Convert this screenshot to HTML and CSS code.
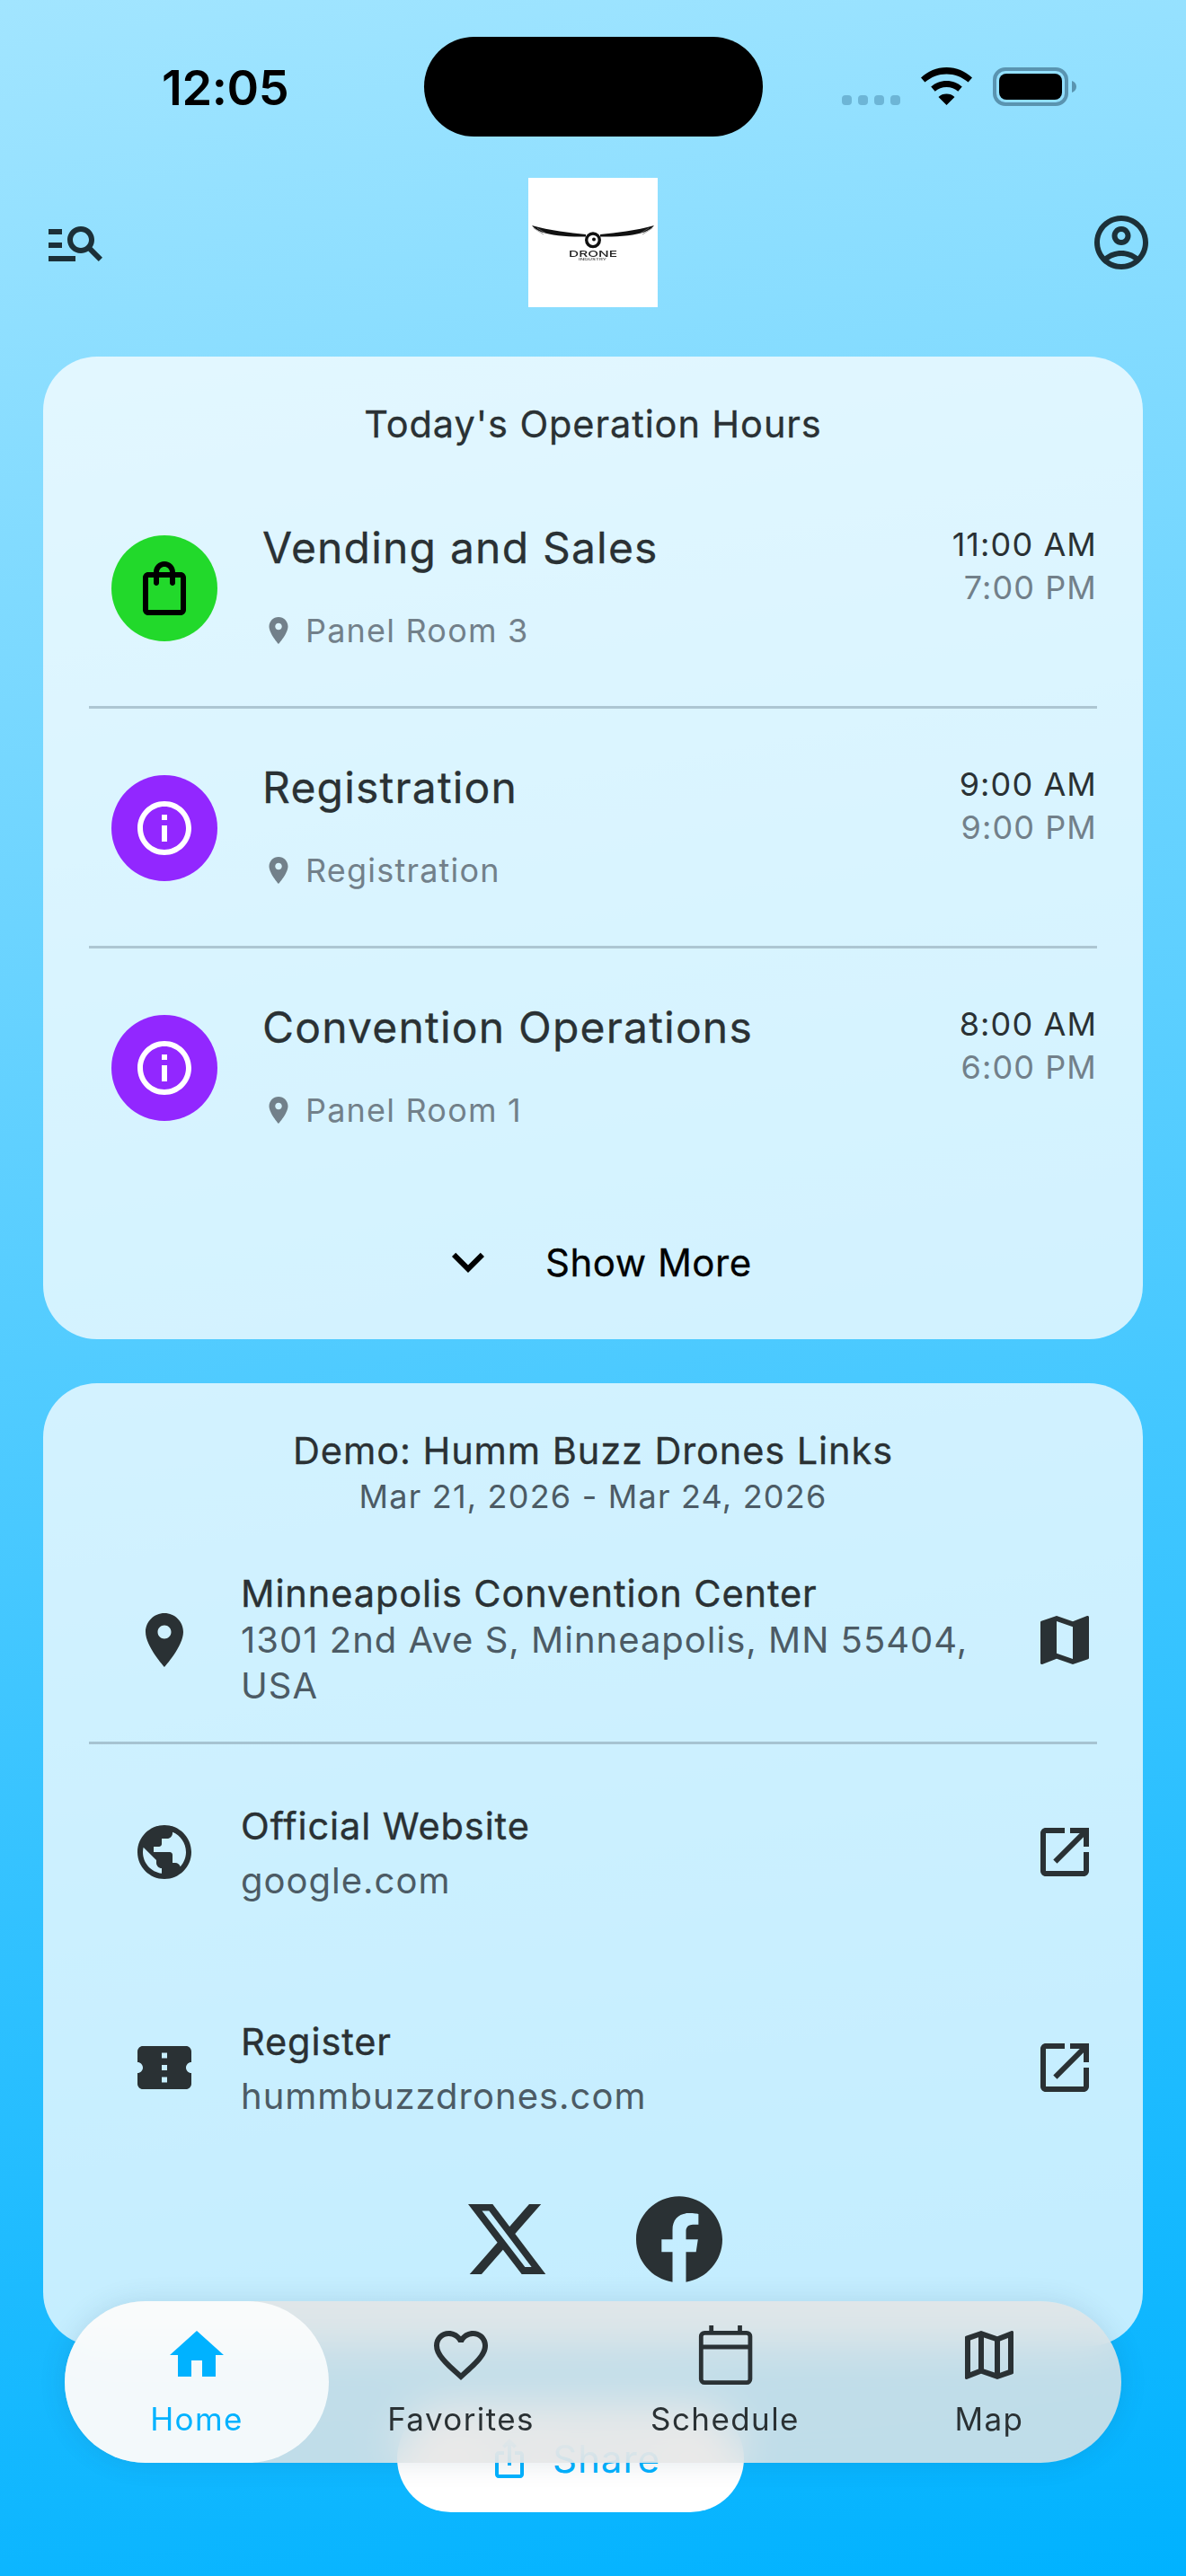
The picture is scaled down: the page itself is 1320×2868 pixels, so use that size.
FILE: index.html
```html
<!DOCTYPE html>
<html>

<head>
    <meta charset="utf-8">
    <title>Humm Buzz Drones</title>
    <link rel="stylesheet" href="styles.css">
</head>

<body>
    <svg class="sprite" xmlns="http://www.w3.org/2000/svg">
        <symbol id="i-search" viewBox="0 0 24 24"><path d="M7 9H2V7h5v2zm0 3H2v2h5v-2zm13.59 7l-3.83-3.83c-.8.52-1.74.83-2.76.83-2.76 0-5-2.24-5-5s2.24-5 5-5 5 2.24 5 5c0 1.02-.31 1.96-.83 2.75L22 17.59 20.59 19zM17 11c0-1.65-1.35-3-3-3s-3 1.35-3 3 1.35 3 3 3 3-1.35 3-3zM2 19h10v-2H2v2z"/></symbol>
        <symbol id="i-account" viewBox="0 0 24 24"><path d="M12 2C6.48 2 2 6.48 2 12s4.48 10 10 10 10-4.48 10-10S17.52 2 12 2zM7.35 18.5C8.66 17.56 10.26 17 12 17s3.34.56 4.65 1.5c-1.31.94-2.91 1.5-4.65 1.5s-3.34-.56-4.65-1.5zm10.79-1.38C16.45 15.8 14.32 15 12 15s-4.45.8-6.14 2.12C4.7 15.73 4 13.95 4 12c0-4.42 3.58-8 8-8s8 3.58 8 8c0 1.95-.7 3.73-1.86 5.12z"/><path d="M12 6c-1.93 0-3.5 1.57-3.5 3.5S10.07 13 12 13s3.5-1.57 3.5-3.5S13.93 6 12 6zm0 5c-.83 0-1.5-.67-1.5-1.5S11.17 8 12 8s1.5.67 1.5 1.5S12.83 11 12 11z"/></symbol>
        <symbol id="i-bag" viewBox="0 0 24 24"><path d="M18 6h-2c0-2.21-1.79-4-4-4S8 3.79 8 6H6c-1.1 0-2 .9-2 2v12c0 1.1.9 2 2 2h12c1.1 0 2-.9 2-2V8c0-1.1-.9-2-2-2zm-6-2c1.1 0 2 .9 2 2h-4c0-1.1.9-2 2-2zm6 16H6V8h2v2c0 .55.45 1 1 1s1-.45 1-1V8h4v2c0 .55.45 1 1 1s1-.45 1-1V8h2v12z"/></symbol>
        <symbol id="i-info" viewBox="0 0 24 24"><path d="M11 7h2v2h-2zm0 4h2v6h-2zm1-9C6.48 2 2 6.48 2 12s4.48 10 10 10 10-4.48 10-10S17.52 2 12 2zm0 18c-4.41 0-8-3.59-8-8s3.59-8 8-8 8 3.59 8 8-3.59 8-8 8z"/></symbol>
        <symbol id="i-place" viewBox="0 0 24 24"><path d="M12 2C8.13 2 5 5.13 5 9c0 5.25 7 13 7 13s7-7.75 7-13c0-3.87-3.13-7-7-7zm0 9.5c-1.38 0-2.5-1.12-2.5-2.5s1.12-2.5 2.5-2.5 2.5 1.12 2.5 2.5-1.12 2.5-2.5 2.5z"/></symbol>
        <symbol id="i-chevron" viewBox="0 0 24 24"><path d="M7.41 8.59L12 13.17l4.59-4.58L18 10l-6 6-6-6 1.41-1.41z"/></symbol>
        <symbol id="i-map" viewBox="0 0 24 24"><path d="M20.5 3l-.16.03L15 5.1 9 3 3.36 4.9c-.21.07-.36.25-.36.48V20.5c0 .28.22.5.5.5l.16-.03L9 18.9l6 2.1 5.64-1.9c.21-.07.36-.25.36-.48V3.5c0-.28-.22-.5-.5-.5zM15 19l-6-2.11V5l6 2.11V19z"/></symbol>
        <symbol id="i-map-line" viewBox="0 0 24 24"><path d="M20.5 3l-.16.03L15 5.1 9 3 3.36 4.9c-.21.07-.36.25-.36.48V20.5c0 .28.22.5.5.5l.16-.03L9 18.9l6 2.1 5.64-1.9c.21-.07.36-.25.36-.48V3.5c0-.28-.22-.5-.5-.5zM10 5.47l4 1.4v11.66l-4-1.4V5.47zm-5 .99l3-1.01v11.7l-3 1.16V6.46zm14 11.08l-3 1.01V6.86l3-1.16v11.84z"/></symbol>
        <symbol id="i-open" viewBox="0 0 24 24"><path d="M19 19H5V5h7V3H5c-1.11 0-2 .9-2 2v14c0 1.1.89 2 2 2h14c1.1 0 2-.9 2-2v-7h-2v7zM14 3v2h3.59l-9.83 9.83 1.41 1.41L19 6.41V10h2V3h-7z"/></symbol>
        <symbol id="i-public" viewBox="0 0 24 24"><path d="M12 2C6.48 2 2 6.48 2 12s4.48 10 10 10 10-4.48 10-10S17.52 2 12 2zm-1 17.93c-3.95-.49-7-3.85-7-7.93 0-.62.08-1.21.21-1.79L9 15v1c0 1.1.9 2 2 2v1.93zm6.9-2.54c-.26-.81-1-1.39-1.9-1.39h-1v-3c0-.55-.45-1-1-1H8v-2h2c.55 0 1-.45 1-1V7h2c1.1 0 2-.9 2-2v-.41c2.93 1.19 5 4.06 5 7.41 0 2.08-.8 3.97-2.1 5.39z"/></symbol>
        <symbol id="i-ticket" viewBox="0 0 24 24"><path d="M22 10V6c0-1.11-.9-2-2-2H4c-1.1 0-1.99.89-1.99 2v4c1.1 0 1.99.9 1.99 2s-.89 2-2 2v4c0 1.1.9 2 2 2h16c1.1 0 2-.9 2-2v-4c-1.1 0-2-.9-2-2s.9-2 2-2zm-9 7.5h-2v-2h2v2zm0-4.5h-2v-2h2v2zm0-4.5h-2v-2h2v2z"/></symbol>
        <symbol id="i-x" viewBox="0 0 24 24"><path d="M18.244 2.25h3.308l-7.227 8.26 8.502 11.24H16.17l-5.214-6.817L4.99 21.75H1.68l7.73-8.835L1.254 2.25H8.08l4.713 6.231zm-1.161 17.52h1.833L7.084 4.126H5.117z"/></symbol>
        <symbol id="i-facebook" viewBox="0 0 24 24"><path d="M24 12.073c0-6.627-5.373-12-12-12s-12 5.373-12 12c0 5.99 4.388 10.954 10.125 11.854v-8.385H7.078v-3.47h3.047V9.43c0-3.007 1.792-4.669 4.533-4.669 1.312 0 2.686.235 2.686.235v2.953H15.83c-1.491 0-1.956.925-1.956 1.874v2.25h3.328l-.532 3.47h-2.796v8.385C19.612 23.027 24 18.062 24 12.073z"/></symbol>
        <symbol id="i-home" viewBox="0 0 24 24"><path d="M10 20v-6h4v6h5v-8h3L12 3 2 12h3v8z"/></symbol>
        <symbol id="i-heart" viewBox="0 0 24 24"><path d="M16.5 3c-1.74 0-3.41.81-4.5 2.09C10.91 3.81 9.24 3 7.5 3 4.42 3 2 5.42 2 8.5c0 3.78 3.4 6.86 8.55 11.54L12 21.35l1.45-1.32C18.6 15.36 22 12.28 22 8.5 22 5.42 19.58 3 16.5 3zm-4.4 15.55l-.1.1-.1-.1C7.14 14.24 4 11.39 4 8.5 4 6.5 5.5 5 7.5 5c1.54 0 3.04.99 3.57 2.36h1.87C13.46 5.99 14.96 5 16.5 5c2 0 3.5 1.5 3.5 3.5 0 2.89-3.14 5.74-7.9 10.05z"/></symbol>
        <symbol id="i-calendar" viewBox="0 0 24 24"><rect x="3.1" y="3.8" width="18.2" height="18.4" rx="1.3" fill="none" stroke="currentColor" stroke-width="1.6"/><path d="M3 9h18.4M6.9 1v3M17.5 1v3" fill="none" stroke="currentColor" stroke-width="1.6"/></symbol>
        <symbol id="i-share" viewBox="0 0 24 24"><path d="M16 5l-1.42 1.42-1.59-1.59V16h-1.98V4.83L9.42 6.42 8 5l4-4 4 4zm4 5v11c0 1.1-.9 2-2 2H6c-1.11 0-2-.9-2-2V10c0-1.11.89-2 2-2h3v2H6v11h12V10h-3V8h3c1.1 0 2 .89 2 2z"/></symbol>
    </svg>

    <div class="status-bar">
        <div class="status-time">12:05</div>
        <div class="island"></div>
        <div class="status-icons">
            <div class="signal"><span></span><span></span><span></span><span></span></div>
            <svg class="wifi" viewBox="0 0 57 42">
                <path d="M28.5 0C17.5 0 7.6 4.4 0 11.600l4.400 5C11.600 10.500 19.600 7.400 28.500 7.400S45.400 10.500 52.600 16.600l4.400-5C49.400 4.400 39.500 0 28.500 0z"/>
                <path d="M28.500 15c-6.700 0-12.800 2.500-17.300 6.600l4.500 5.200c3.300-3 7.900-4.800 12.800-4.800s9.500 1.800 12.800 4.800l4.500-5.200c-4.500-4.100-10.600-6.600-17.300-6.600z"/>
                <path d="M28.500 29.500c-3.500 0-6.700 1.200-9 3.400L28.500 42l9-9.100c-2.300-2.200-5.500-3.400-9-3.400z"/>
            </svg>
            <svg class="battery" viewBox="0 0 93 43">
                <rect x="2" y="2" width="80" height="39" rx="12" fill="none" stroke="#5a94b0" stroke-width="4"/>
                <rect x="7" y="7" width="70" height="29" rx="8" fill="#000"/>
                <path d="M88 15c3 .8 5 3.400 5 6.500s-2 5.700-5 6.500z" fill="#5a94b0"/>
            </svg>
        </div>
    </div>

    <header class="top-bar">
        <svg class="icon icon-search"><use href="#i-search"/></svg>
        <div class="logo">
            <svg viewBox="0 0 144 144">
                <path d="M4 53c16 5 41 8 60 10v2.500C44 66 25 64 15 60.500 10 58.500 6 56 4 53zM140 53c-16 5-41 8-60 10v2.500c20 .5 39-1.500 49-5 5-2 9-4.500 11-7.500z" fill="#111"/>
                <path d="M6 56l11 7M10 56l10 6M138 56l-11 7M134 56l-10 6" fill="none" stroke="#777" stroke-width="0.7"/>
                <circle cx="72" cy="69.300" r="7.300" fill="#fff" stroke="#111" stroke-width="3.400"/>
                <circle cx="73" cy="68.500" r="2" fill="#111"/>
                <text class="logo-name" x="45" y="87.700" textLength="54" lengthAdjust="spacingAndGlyphs">DRONE</text>
                <text class="logo-sub" x="56" y="92" textLength="31" lengthAdjust="spacingAndGlyphs">INDUSTRY</text>
            </svg>
        </div>
        <svg class="icon icon-account"><use href="#i-account"/></svg>
    </header>

    <section class="card hours-card">
        <h2 class="card-title">Today's Operation Hours</h2>

        <div class="hour-row">
            <div class="badge badge-green"><svg class="badge-icon"><use href="#i-bag"/></svg></div>
            <div class="hour-text">
                <div class="hour-name">Vending and Sales</div>
                <div class="hour-place"><svg class="pin"><use href="#i-place"/></svg>Panel Room 3</div>
            </div>
            <div class="hour-times">
                <div class="time-start">11:00 AM</div>
                <div class="time-end">7:00 PM</div>
            </div>
        </div>

        <div class="hour-row">
            <div class="badge badge-purple"><svg class="badge-icon"><use href="#i-info"/></svg></div>
            <div class="hour-text">
                <div class="hour-name">Registration</div>
                <div class="hour-place"><svg class="pin"><use href="#i-place"/></svg>Registration</div>
            </div>
            <div class="hour-times">
                <div class="time-start">9:00 AM</div>
                <div class="time-end">9:00 PM</div>
            </div>
        </div>

        <div class="hour-row">
            <div class="badge badge-purple"><svg class="badge-icon"><use href="#i-info"/></svg></div>
            <div class="hour-text">
                <div class="hour-name">Convention Operations</div>
                <div class="hour-place"><svg class="pin"><use href="#i-place"/></svg>Panel Room 1</div>
            </div>
            <div class="hour-times">
                <div class="time-start">8:00 AM</div>
                <div class="time-end">6:00 PM</div>
            </div>
        </div>

        <div class="show-more">
            <svg class="chevron"><use href="#i-chevron"/></svg>
            <span>Show More</span>
        </div>
    </section>

    <section class="card links-card">
        <h2 class="links-title">Demo: Humm Buzz Drones Links</h2>
        <div class="links-dates">Mar 21, 2026 - Mar 24, 2026</div>

        <div class="link-row link-row-address">
            <svg class="icon"><use href="#i-place"/></svg>
            <div class="link-text">
                <div class="link-name">Minneapolis Convention Center</div>
                <div class="link-value">1301 2nd Ave S, Minneapolis, MN 55404, USA</div>
            </div>
            <svg class="icon"><use href="#i-map"/></svg>
        </div>

        <div class="link-row">
            <svg class="icon"><use href="#i-public"/></svg>
            <div class="link-text link-text-spaced">
                <div class="link-name">Official Website</div>
                <div class="link-value">google.com</div>
            </div>
            <svg class="icon"><use href="#i-open"/></svg>
        </div>

        <div class="link-row">
            <svg class="icon"><use href="#i-ticket"/></svg>
            <div class="link-text link-text-spaced">
                <div class="link-name">Register</div>
                <div class="link-value">hummbuzzdrones.com</div>
            </div>
            <svg class="icon"><use href="#i-open"/></svg>
        </div>

        <div class="socials">
            <svg class="social-x"><use href="#i-x"/></svg>
            <svg class="social-fb"><use href="#i-facebook"/></svg>
        </div>
    </section>

    <button class="share-button">
        <svg class="share-icon"><use href="#i-share"/></svg>
        <span>Share</span>
    </button>

    <nav class="tab-bar">
        <div class="tab tab-active"><svg class="icon"><use href="#i-home"/></svg><span>Home</span></div>
        <div class="tab"><svg class="icon"><use href="#i-heart"/></svg><span>Favorites</span></div>
        <div class="tab"><svg class="icon"><use href="#i-calendar"/></svg><span>Schedule</span></div>
        <div class="tab"><svg class="icon"><use href="#i-map-line"/></svg><span>Map</span></div>
    </nav>
</body>

</html>
```

FILE: styles.css
```css
* {
    box-sizing: border-box;
}

html,
body {
    margin: 0;
    height: 2868px;
}

body {
    position: relative;
    width: 1320px;
    overflow: hidden;
    font-family: Inter, "Noto Sans", sans-serif;
    color: #2a3134;
    background: linear-gradient(170deg, #a2e5ff 0%, #00b2ff 100%);
}

.sprite {
    display: none;
}

.icon {
    display: block;
    flex: none;
    width: 72px;
    height: 72px;
    fill: currentColor;
}

/* status bar */

.status-bar {
    display: grid;
    grid-template-columns: 472px 377px 471px;
    height: 198px;
    padding-top: 41px;
}

.status-time {
    height: 111px;
    padding-left: 180px;
    color: #000;
    font-size: 54px;
    font-weight: 600;
    line-height: 114px;
    letter-spacing: -0.4px;
}

.island {
    height: 111px;
    border-radius: 56px;
    background: #000;
}

.status-icons {
    display: flex;
    align-items: flex-start;
    height: 111px;
    padding: 34px 0 0 88px;
}

.signal {
    display: flex;
    gap: 7px;
    margin: 31px 23px 0 0;
}

.signal span {
    width: 11px;
    height: 11px;
    border-radius: 4px;
    background: #6db5d6;
}

.wifi {
    width: 57px;
    height: 42px;
    margin-right: 23px;
}

.battery {
    width: 93px;
    height: 43px;
}

/* top bar */

.top-bar {
    display: grid;
    grid-template-columns: 1fr auto 1fr;
    align-items: center;
    height: 144px;
    padding: 0 36px;
    color: #1c3038;
}

.icon-search {
    margin-left: 12px;
}

.icon-account {
    justify-self: end;
}

.logo {
    width: 144px;
    height: 144px;
    background: #fff;
}

.logo svg {
    display: block;
    width: 144px;
    height: 144px;
    filter: blur(0.4px);
}

.logo-name {
    font-size: 9.500px;
    font-weight: 500;
    fill: #222;
}

.logo-sub {
    font-size: 3.500px;
    font-weight: 500;
    fill: #444;
}

/* cards */

.card {
    margin: 0 48px;
    border-radius: 60px;
    background: rgba(255, 255, 255, 0.75);
    padding: 0 51px;
}

.hours-card {
    height: 1094px;
    margin-top: 55px;
    padding-top: 48px;
}

.card-title {
    margin: 0;
    height: 77px;
    font-size: 41.500px;
    font-weight: 400;
    line-height: 54px;
    letter-spacing: 0.9px;
    text-align: center;
    -webkit-text-stroke: 0.3px;
}

.hour-row {
    display: flex;
    align-items: center;
    height: 267px;
    padding: 2px 0 0 25px;
    border-bottom: 3px solid #adc6d2;
}

.hour-row:nth-of-type(3) {
    border-bottom-color: transparent;
}

.badge {
    display: flex;
    align-items: center;
    justify-content: center;
    flex: none;
    width: 118px;
    height: 118px;
    border-radius: 50%;
}

.badge-green {
    background: #22d92b;
    color: #000;
}

.badge-purple {
    background: #9227ff;
    color: #fff;
}

.badge-icon {
    width: 72px;
    height: 72px;
    fill: currentColor;
}

.hour-text {
    flex: 1;
    margin: 0 0 3px 50px;
}

.hour-name {
    font-size: 48px;
    font-weight: 400;
    line-height: 60px;
    letter-spacing: 1.2px;
    -webkit-text-stroke: 0.3px;
}

.hour-place {
    display: flex;
    align-items: center;
    gap: 12px;
    margin-top: 37px;
    color: #72808a;
    font-size: 36px;
    line-height: 50px;
    letter-spacing: 1.2px;
}

.pin {
    width: 36px;
    height: 36px;
    fill: currentColor;
}

.hour-times {
    align-self: flex-start;
    margin-top: 58px;
    font-size: 36px;
    line-height: 48px;
    letter-spacing: 1.1px;
    text-align: right;
}

.time-end {
    color: #72808a;
}

.show-more {
    display: flex;
    align-items: center;
    height: 120px;
    margin-top: 22px;
    padding-left: 386px;
    color: #000;
    font-size: 42px;
    font-weight: 400;
    letter-spacing: 0.5px;
    -webkit-text-stroke: 0.3px;
}

.chevron {
    flex: none;
    width: 72px;
    height: 72px;
    margin-right: 50px;
    fill: currentColor;
}

.links-card {
    height: 1072px;
    margin-top: 49px;
    padding-top: 48px;
}

.links-title {
    margin: 0;
    font-size: 41.500px;
    font-weight: 400;
    line-height: 54px;
    letter-spacing: 0.9px;
    text-align: center;
    -webkit-text-stroke: 0.3px;
}

.links-dates {
    height: 46px;
    color: #4c5b65;
    font-size: 36px;
    line-height: 48px;
    letter-spacing: 1.2px;
    text-align: center;
}

.link-row {
    display: flex;
    align-items: center;
    height: 240px;
    padding-left: 48px;
}

.link-row-address {
    height: 254px;
    padding-top: 24px;
    border-bottom: 3px solid #a6c3d1;
}

.link-text {
    flex: 1;
    margin: 0 30px 0 49px;
}

.link-text-spaced {
    margin-top: 2px;
}

.link-name {
    font-size: 41.500px;
    font-weight: 400;
    line-height: 51px;
    letter-spacing: 0.9px;
    -webkit-text-stroke: 0.4px;
}

.link-value {
    color: #4c5b65;
    font-size: 40px;
    line-height: 51px;
    letter-spacing: 1px;
}

.link-text-spaced .link-value {
    margin-top: 9px;
}

.socials {
    display: flex;
    align-items: center;
    justify-content: center;
    gap: 96px;
    height: 96px;
    margin-top: 23px;
}

.social-x {
    width: 96px;
    height: 96px;
    fill: currentColor;
}

.social-fb {
    width: 96px;
    height: 96px;
    fill: currentColor;
}

/* floating share button and tab bar */

.share-button {
    position: absolute;
    left: 442px;
    top: 2677px;
    display: flex;
    align-items: center;
    justify-content: center;
    gap: 24px;
    width: 386px;
    height: 120px;
    padding: 0 0 0 8px;
    border: none;
    border-radius: 60px;
    background: #fff;
    color: #00b2ff;
    font-family: inherit;
    font-size: 42px;
    letter-spacing: 1px;
}

.share-icon {
    width: 48px;
    height: 48px;
    fill: currentColor;
}

.tab-bar {
    position: absolute;
    left: 72px;
    top: 2562px;
    display: grid;
    grid-template-columns: repeat(4, 1fr);
    width: 1176px;
    height: 180px;
    border-radius: 90px;
    background: rgba(228, 228, 228, 0.83);
    box-shadow: 0 0 30px rgba(0, 60, 90, 0.12);
    backdrop-filter: blur(24px);
}

.tab {
    display: flex;
    flex-direction: column;
    align-items: center;
    padding-top: 24px;
    border-radius: 90px;
    font-size: 35px;
    line-height: 48px;
    letter-spacing: 1.4px;
}

.tab span {
    margin-top: 11px;
}

.tab-active {
    background: rgba(255, 255, 255, 0.82);
    color: #00b2ff;
}
```
